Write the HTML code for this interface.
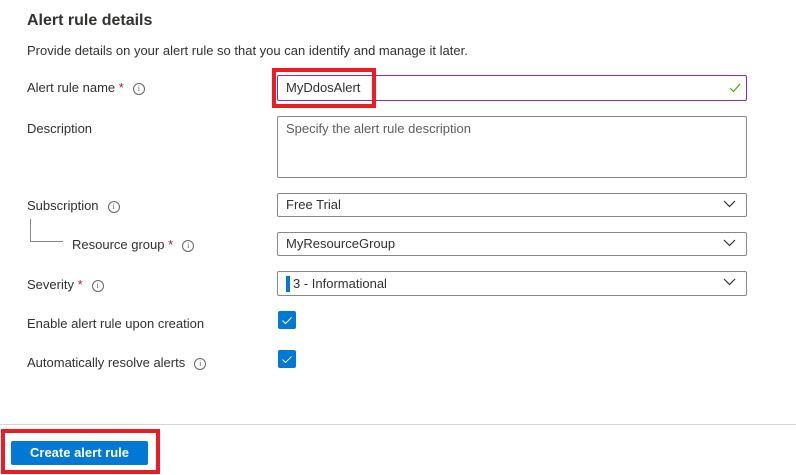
<!DOCTYPE html>
<html><head><style>
body{margin:0;width:796px;height:475px;background:#fff;font-family:"Segoe UI","Liberation Sans",sans-serif;color:#323130;position:relative;overflow:hidden}
.a{position:absolute}
.t{font-size:13px;line-height:16px;white-space:nowrap}
.req{color:#a4262c}
.info{display:inline-block;width:10px;height:10px;border:1px solid #666;border-radius:50%;font-size:8px;line-height:10px;text-align:center;color:#666;vertical-align:middle;margin-left:9px;font-family:"Liberation Serif",serif}
.box{border:1px solid #8a8886;border-radius:2px;box-sizing:border-box;left:277px;width:470px}
.chev{position:absolute;right:10px;top:6px}
.cb{left:278px;width:18px;height:18px;background:#0078d4;border-radius:2px}
</style></head><body>
<div class="a" style="left:27px;top:12px;font-size:16px;font-weight:bold;color:#323130">Alert rule details</div>
<div class="a t" style="left:27px;top:43px">Provide details on your alert rule so that you can identify and manage it later.</div>

<div class="a t" style="left:27px;top:80px">Alert rule name <span class="req">*</span><span class="info">i</span></div>
<div class="a box" style="top:75px;height:26px;border-color:#8c2cab"><span class="t a" style="left:8px;top:4px">MyDdosAlert</span>
<svg class="a" style="right:5px;top:7px" width="12" height="10"><path d="M1 5l3.5 3.5L11 1" stroke="#57a300" stroke-width="1.2" fill="none"/></svg></div>
<div class="a" style="left:272px;top:68px;width:96px;height:32px;border:4px solid #ec1c24"></div>

<div class="a t" style="left:27px;top:121px">Description</div>
<div class="a box" style="top:116px;height:62px"><span class="t a" style="left:8px;top:4px;color:#605e5c">Specify the alert rule description</span></div>

<div class="a t" style="left:27px;top:198px">Subscription<span class="info">i</span></div>
<div class="a" style="left:30px;top:219px;width:32px;height:22px;border-left:1px solid #8a8886;border-bottom:1px solid #8a8886"></div>
<div class="a t" style="left:72px;top:237px">Resource group <span class="req">*</span><span class="info">i</span></div>
<div class="a t" style="left:27px;top:277px">Severity <span class="req">*</span><span class="info">i</span></div>

<div class="a box" style="top:193px;height:24px"><span class="t a" style="left:8px;top:3px">Free Trial</span><svg class="chev" width="13" height="8"><path d="M1 1l5.5 5.5L12 1" stroke="#323130" fill="none" stroke-width="1.2"/></svg></div>
<div class="a box" style="top:232px;height:24px"><span class="t a" style="left:8px;top:3px">MyResourceGroup</span><svg class="chev" width="13" height="8"><path d="M1 1l5.5 5.5L12 1" stroke="#323130" fill="none" stroke-width="1.2"/></svg></div>
<div class="a box" style="top:271px;height:25px"><span class="a" style="left:8px;top:4px;width:4px;height:16px;background:#0078d4"></span><span class="t a" style="left:15px;top:4px">3 - Informational</span><svg class="chev" width="13" height="8"><path d="M1 1l5.5 5.5L12 1" stroke="#323130" fill="none" stroke-width="1.2"/></svg></div>

<div class="a t" style="left:27px;top:316px">Enable alert rule upon creation</div>
<div class="a cb" style="top:311px"><svg width="18" height="18"><path d="M4.5 9.5l3 3 6-6" stroke="#fff" fill="none" stroke-width="1"/></svg></div>
<div class="a t" style="left:27px;top:355px">Automatically resolve alerts<span class="info">i</span></div>
<div class="a cb" style="top:350px"><svg width="18" height="18"><path d="M4.5 9.5l3 3 6-6" stroke="#fff" fill="none" stroke-width="1"/></svg></div>

<div class="a" style="left:0;top:424px;width:796px;height:1px;background:#d6d6d6"></div>
<div class="a" style="left:1px;top:429px;width:151px;height:37px;border:4px solid #ec1c24"></div>
<div class="a" style="left:11px;top:441px;width:137px;height:24px;background:#0078d4;border-radius:2px;color:#fff;font-weight:bold;font-size:13px;line-height:24px;text-align:center">Create alert rule</div>
</body></html>
